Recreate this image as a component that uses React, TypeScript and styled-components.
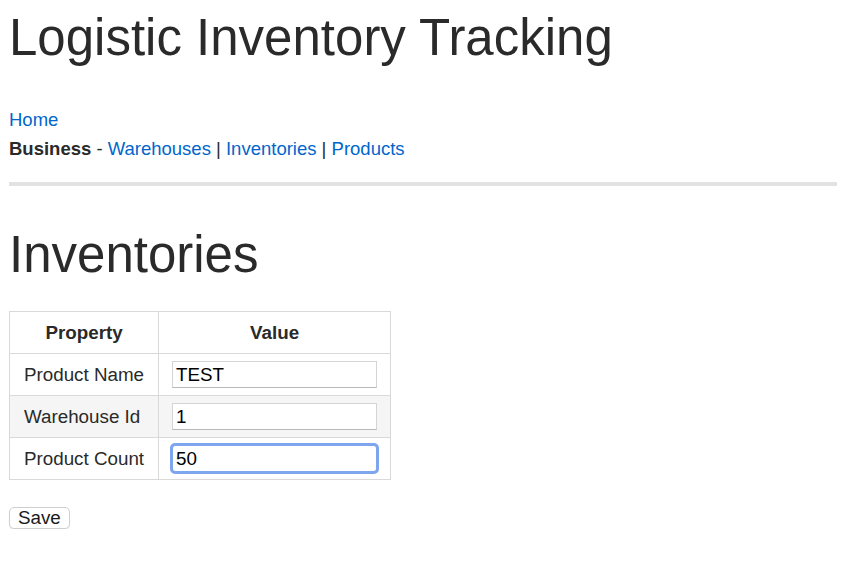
import React from "react";
import styled, { createGlobalStyle } from "styled-components";

const Global = createGlobalStyle`
  html, body { margin: 0; padding: 0; background: #fff; }
  body { font-family: "Liberation Sans", Arial, sans-serif; color: #2a2a2a; }
`;

const Page = styled.div`
  padding: 0 11px 0 9px;
  display: flex;
  flex-direction: column;
`;

const Title = styled.h1`
  margin: 4px 0 0;
  font-size: 51px;
  font-weight: 400;
  line-height: 67px;
  color: #2a2a2a;
`;

const Nav = styled.nav`
  margin-top: 34px;
  font-size: 18.5px;
  line-height: 29px;
  display: flex;
  flex-direction: column;
`;

const NavLine = styled.div``;

const Link = styled.a`
  color: #0066cc;
  text-decoration: none;
`;

const Label = styled.b`
  font-weight: 700;
`;

const Rule = styled.hr`
  margin: 19px 0 0;
  border: 0;
  height: 4px;
  background: #e2e2e2;
`;

const Heading = styled.h2`
  margin: 37px 0 0;
  font-size: 51px;
  font-weight: 400;
  line-height: 64px;
  color: #2a2a2a;
`;

const Table = styled.table`
  margin-top: 24px;
  align-self: flex-start;
  border-collapse: collapse;
  font-size: 18.8px;
`;

const Row = styled.tr<{ $alt?: boolean }>`
  background: ${(p) => (p.$alt ? "#f5f5f5" : "#fff")};
  height: 42px;
`;

const Th = styled.th<{ $w?: number }>`
  border: 1px solid #d9d9d9;
  font-weight: 700;
  padding: 0 14px;
  text-align: center;
  ${(p) => (p.$w ? `width: ${p.$w}px;` : "")}
`;

const Td = styled.td<{ $field?: boolean }>`
  border: 1px solid #d9d9d9;
  padding: ${(p) => (p.$field ? "0 13px" : "0 14px")};
  white-space: nowrap;
`;

const Input = styled.input<{ $focus?: boolean }>`
  box-sizing: border-box;
  width: 205px;
  height: 27px;
  font-family: "Liberation Sans", Arial, sans-serif;
  font-size: 18.8px;
  color: #000;
  padding: 1px 3px;
  border: 1px solid #d4d4d4;
  border-bottom-color: #b8b8b8;
  outline: ${(p) => (p.$focus ? "3px solid #7ea6ef" : "none")};
  outline-offset: -1px;
  border-radius: ${(p) => (p.$focus ? "3px" : "0")};
  display: block;
`;

const Button = styled.button`
  margin-top: 27px;
  align-self: flex-start;
  font-family: "Liberation Sans", Arial, sans-serif;
  font-size: 18.8px;
  color: #1a1a1a;
  background: #fff;
  border: 1px solid #cfcfcf;
  border-radius: 5px;
  padding: 0 8px;
  height: 22px;
  line-height: 20px;
  box-shadow: 0 1px 1px rgba(0,0,0,0.08);
`;

export default function App() {
  return (
    <Page>
      <Global />
      <Title>Logistic Inventory Tracking</Title>
      <Nav>
        <NavLine><Link href="#">Home</Link></NavLine>
        <NavLine>
          <Label>Business</Label> - <Link href="#">Warehouses</Link> | <Link href="#">Inventories</Link> | <Link href="#">Products</Link>
        </NavLine>
      </Nav>
      <Rule />
      <Heading>Inventories</Heading>
      <Table>
        <thead>
          <Row>
            <Th $w={120}>Property</Th>
            <Th>Value</Th>
          </Row>
        </thead>
        <tbody>
          <Row>
            <Td>Product Name</Td>
            <Td $field><Input defaultValue="TEST" /></Td>
          </Row>
          <Row $alt>
            <Td>Warehouse Id</Td>
            <Td $field><Input defaultValue="1" /></Td>
          </Row>
          <Row>
            <Td>Product Count</Td>
            <Td $field><Input $focus defaultValue="50" /></Td>
          </Row>
        </tbody>
      </Table>
      <Button>Save</Button>
    </Page>
  );
}
